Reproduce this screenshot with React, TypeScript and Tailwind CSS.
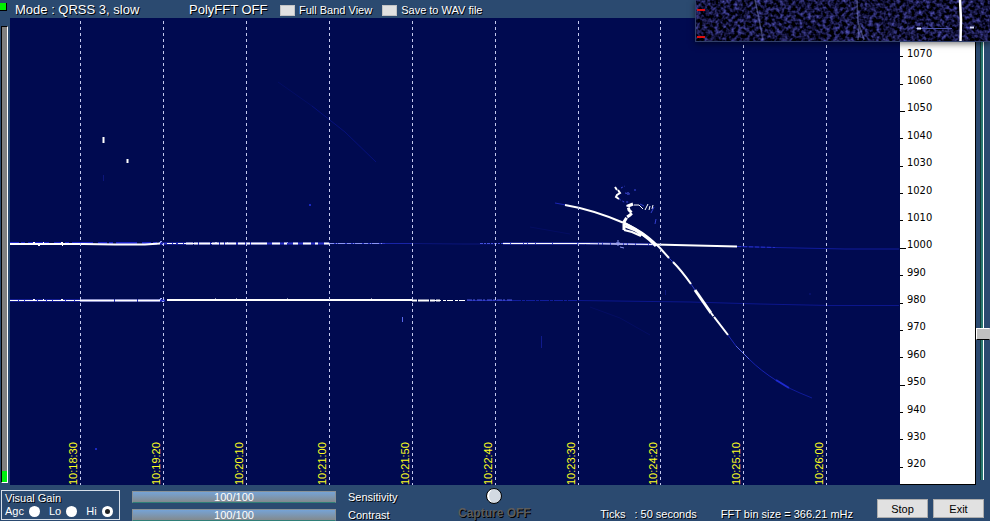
import { useState } from "react"

const TIME_MARKS = [
    { x: 80, label: "10:18:30" },
    { x: 163, label: "10:19:20" },
    { x: 246, label: "10:20:10" },
    { x: 329, label: "10:21:00" },
    { x: 412, label: "10:21:50" },
    { x: 495, label: "10:22:40" },
    { x: 578, label: "10:23:30" },
    { x: 660, label: "10:24:20" },
    { x: 743, label: "10:25:10" },
    { x: 826, label: "10:26:00" },
]

const FREQUENCIES = [1070, 1060, 1050, 1040, 1030, 1020, 1010, 1000, 990, 980, 970, 960, 950, 940, 930, 920]

type Trace = { d: string; color?: string; width?: number; dash?: string }

const TRACES: Trace[] = [
    // upper carrier
    { d: "M10 243.5H160", color: "#1c22c8", width: 3, dash: "9 2 4 3 21 5" },
    { d: "M10 244H83", width: 2 },
    { d: "M33 242.5H35M38 245.5H40M43 242.5H44M61 242.5H63M62 245.5H63M215 242.5H217M227 242.5H228M287 242.5H288" },
    { d: "M83 244L115 244.5H145L160 243.5", width: 2 },
    { d: "M160 243.5H330", color: "#2a30cc", width: 2 },
    { d: "M159 242.5H161M162 244.5H164M160 241.5H162", color: "#a0a8f8" },
    { d: "M167 243.5H215", dash: "5 1 3 2" },
    { d: "M186 243.5H262", width: 2, dash: "7 1 4 1 11 2" },
    { d: "M262 243.5H330", width: 2, dash: "5 5 8 4 3 6" },
    { d: "M330 243.5H385", color: "#2b36c4" },
    { d: "M330 243.5H382", color: "#8a94f4", dash: "4 2 1 1 7 2" },
    { d: "M385 243.5H412", color: "#1824a8" },
    { d: "M412 243.5L462 244H495", color: "#0a1478" },
    { d: "M480 243.5H505", color: "#4450dc", dash: "3 1 2 1" },
    { d: "M503 243.5H600L655 244.5", color: "#4048d0", width: 2 },
    { d: "M503 243.5H578L655 244.5", dash: "7 1 12 1 3 1" },
    { d: "M540 243.5H592", dash: "11 2" },
    { d: "M655 244.5L737 246.5", width: 2 },
    { d: "M737 246.5L775 247.5L845 249H899", color: "#101b9c" },
    { d: "M737 246.5L775 247.5", color: "#2630c8", dash: "4 2" },
    // lower carrier
    { d: "M10 300.5H165", color: "#2931d0", width: 2 },
    { d: "M10 300.5H80", dash: "8 1 5 1 12 1" },
    { d: "M33 299.5H35M43 299.5H44M61 299.5H63M215 299H216M236 299H237M287 299H288M371 299H372" },
    { d: "M80 300.5H160", width: 2, dash: "34 1 22 1" },
    { d: "M159 299.5H161M162 301.5H164M160 298.5H162", color: "#a0a8f8" },
    { d: "M167 300H412", width: 2 },
    { d: "M412 300.5H440", width: 2, dash: "5 1 11 1" },
    { d: "M435 300.5H467", dash: "6 2 3 1" },
    { d: "M467 300.5H512", color: "#1c26a8" },
    { d: "M467 300H512", color: "#4d58e0", dash: "5 1 2 2" },
    { d: "M512 300.5H578", color: "#111d9c", dash: "9 1 3 1" },
    { d: "M578 300.5L690 302L760 304L830 305.5H899", color: "#0b168c" },
    // doppler curve
    { d: "M555 203L566 205", color: "#1a24b4" },
    { d: "M565 205C583 208 603 214 624 223C644 232 653 241 660 248L669 258", width: 2 },
    { d: "M624 223C637 230 648 237 656 246", width: 3 },
    { d: "M669 258L673 262", color: "#3340c8" },
    { d: "M673 262C680 269 686 277 691 284", width: 2 },
    { d: "M691 284L695 290", color: "#3340c8" },
    { d: "M695 290L711 313", width: 3 },
    { d: "M711 313L728 335", width: 2, dash: "4 1 30 0" },
    { d: "M728 335L736 346", color: "#1c28b8" },
    { d: "M736 346L749 359", color: "#5562e4" },
    { d: "M749 359C757 367 766 374 777 381", color: "#1622b0" },
    { d: "M776 380L789 388", color: "#1e2ad0", width: 2 },
    { d: "M789 388L800 393L812 398", color: "#0f1a98" },
    // squiggle above the crossing
    { d: "M615 187L617 190M618 190L620 193L617 195L616 197L619 199", width: 2 },
    { d: "M619 199L624 202L629 202M625 193L630 194M621 188L625 186M635 189V192", color: "#3c48e0", dash: "2 2" },
    { d: "M628 192V195", color: "#5560f0" },
    { d: "M633 204L628 206L629 210L632 213L630 215L627 217L624 222L624 230", width: 3, dash: "6 1" },
    { d: "M624 230L632 232L641 236M624 226L634 230L646 237", width: 2 },
    { d: "M634 205L639 205L643 209M645 210L648 204M649 210L650 206M652 209L653 205" },
    { d: "M654 207L651 213M656 219L655 224M640 204L644 206", color: "#3340d0" },
    { d: "M618 240V246M616 243H620M620 247L624 248", color: "#8f98f0" },
    // stray specks
    { d: "M103.5 137V143M127.5 159V163", width: 2 },
    { d: "M103.5 175V181", color: "#0c167c" },
    { d: "M402.5 317V322", color: "#5a68ec" },
    { d: "M541.5 336V348", color: "#101a8c" },
    { d: "M309 205H311M95 449H97", color: "#1a28c0", width: 2 },
    { d: "M665.5 290V295M809 294H811", color: "#0c1780" },
    // faint echoes
    { d: "M278 82L312 106", color: "#030d64" },
    { d: "M312 106L345 132L376 162", color: "#06107a" },
    { d: "M530 227L570 234M590 307L620 318L650 335", color: "#040d62" },
]

const shadow = "[text-shadow:1px_1px_0_#000]"

const Spectrogram = () => (
    <svg
        viewBox="10 18 890 467"
        preserveAspectRatio="none"
        className="h-full min-h-[467px] w-full bg-[#000a50]"
        role="img"
        aria-label="Waterfall display"
    >
        {TRACES.map(({ d, color = "#fff", width = 1, dash }) => (
            <path key={d + color} d={d} fill="none" stroke={color} strokeWidth={width} strokeDasharray={dash} />
        ))}
        {TIME_MARKS.map(({ x, label }) => (
            <g key={label}>
                <path d={`M${x + 0.5} 21V485`} stroke="#c3c8ee" strokeDasharray="3 3" shapeRendering="crispEdges" />
                <text transform={`translate(${x - 3} 485) rotate(-90)`} className="fill-[#ffff20] text-[11px]">
                    {label}
                </text>
            </g>
        ))}
    </svg>
)

const FrequencyScale = () => (
    <div className="flex w-[76px] shrink-0 flex-col border-r border-b border-black bg-white pt-[22px] pb-[6px] font-['DejaVu_Sans_Condensed','Noto_Sans',sans-serif] text-[11px] leading-4 text-black">
        {FREQUENCIES.map(freq => (
            <div key={freq} className="flex flex-1 items-center">
                <span
                    className={`mt-[6px] h-px bg-black ${freq === 1000 ? "w-[6px]" : freq % 50 === 0 ? "w-[5px]" : "w-[3px]"}`}
                />
                <span className={freq === 1000 ? "ml-px" : freq % 50 === 0 ? "ml-[2px]" : "ml-1"}>{freq}</span>
            </div>
        ))}
    </div>
)

// Window of a second receiver, overlapping the corner of this one
const OverlapWindow = () => (
    <div className="absolute top-0 right-0 h-[42px] w-[295px] border-b border-l border-[#31406a] bg-[#04041c] shadow-[0_2px_6px_rgba(0,0,0,0.5)]">
        <svg viewBox="0 0 294 41" className="h-full w-full" aria-hidden="true">
            <filter id="noise" x="0" y="0" width="100%" height="100%" colorInterpolationFilters="sRGB">
                <feTurbulence type="fractalNoise" baseFrequency="0.26" numOctaves="2" seed="7" />
                <feColorMatrix values="0.7 0 0 0 -0.28  0.7 0 0 0 -0.28  1.4 0 0 0 -0.48  0 0 0 0 1" />
            </filter>
            <rect width="294" height="41" filter="url(#noise)" />
            <path
                d="M59 0L62 14L67 40M161 0L162 22L168 40M163 26L162 40"
                stroke="#8f96dc"
                strokeWidth="1.5"
                opacity="0.4"
                fill="none"
            />
            <path d="M220 28.5H256" stroke="#4b52a8" />
            <path d="M221 28.5H225M274 27.5H278" stroke="#d8dcff" strokeWidth="2" />
            <path d="M264 0L265 20L264.5 41" stroke="#fff" strokeWidth="2.5" fill="none" />
            <path d="M1 10H9M1 37H9" stroke="#e01010" strokeWidth="2" />
        </svg>
    </div>
)

const CheckOption = ({ id, label }: { id: string; label: string }) => (
    <label htmlFor={id} className={`flex items-center gap-1 text-[11px] ${shadow}`}>
        <input
            id={id}
            type="checkbox"
            className="h-[11px] w-[15px] appearance-none border border-[#c4c4c4] bg-[#e1e1e1] checked:bg-[#202020]"
        />
        {label}
    </label>
)

const LevelBar = ({ id, label }: { id: string; label: string }) => {
    const [level, setLevel] = useState(100)
    return (
        <div className="flex h-3 items-center gap-3">
            <div className="relative h-3 w-[204px]">
                <input
                    id={id}
                    type="range"
                    min={0}
                    max={100}
                    value={level}
                    onChange={e => setLevel(Number(e.target.value))}
                    className="block h-full w-full appearance-none border border-[#8a9297] border-b-[#2f7f78] bg-linear-to-b from-[#76a3d6] to-[#828a8e] [&::-webkit-slider-thumb]:h-3 [&::-webkit-slider-thumb]:w-1 [&::-webkit-slider-thumb]:appearance-none"
                />
                <span className="pointer-events-none absolute inset-0 text-center text-[11px] leading-3">{level}/100</span>
            </div>
            <label htmlFor={id} className={`text-[11px] leading-3 ${shadow}`}>
                {label}
            </label>
        </div>
    )
}

const VisualGain = () => {
    const [gain, setGain] = useState("Hi")
    return (
        <fieldset className="mb-px ml-px h-[30px] w-[119px] shrink-0 border border-[#d8e0ea] pt-px pl-[3px] text-[11px]">
            <legend className={`float-left w-full leading-[13px] ${shadow}`}>Visual Gain</legend>
            <div className="clear-both flex gap-[9px]">
                {["Agc", "Lo", "Hi"].map(option => (
                    <label key={option} className="flex items-center gap-[5px] leading-[13px]">
                        {option}
                        <input
                            type="radio"
                            name="gain"
                            checked={gain === option}
                            onChange={() => setGain(option)}
                            className="size-[11px] appearance-none rounded-full bg-white checked:border-[3px] checked:border-white checked:bg-[#222]"
                        />
                    </label>
                ))}
            </div>
        </fieldset>
    )
}

const App = () => {
    const [offset, setOffset] = useState(69)
    return (
        <div className="relative flex min-h-screen flex-col overflow-hidden bg-[#2b4a70] font-['Liberation_Sans',Arial,sans-serif] text-white">
            <header className={`flex h-[18px] items-center pt-[2px] text-[13px] leading-4 ${shadow}`}>
                <span className="mb-[6px] h-2 w-[7px] border-r border-b border-black bg-[#00f000]" />
                <span className="ml-2 w-[174px]">Mode : QRSS 3, slow</span>
                <span className="w-[91px]">PolyFFT OFF</span>
                <div className="flex gap-[10px]">
                    <CheckOption id="full-band" label="Full Band View" />
                    <CheckOption id="save-wav" label="Save to WAV file" />
                </div>
            </header>

            <main className="flex flex-1">
                <div className="w-[10px] shrink-0 pt-2 pr-[2px] pb-[2px] pl-px">
                    <div className="flex h-full flex-col justify-end border-t border-r border-b border-l border-t-black border-r-white border-b-white border-l-black bg-[#808080]">
                        <div className="h-[11px] bg-[#00f010]" />
                    </div>
                </div>
                <div className="min-w-0 flex-1">
                    <Spectrogram />
                </div>
                <FrequencyScale />
                <div className="flex w-[14px] shrink-0 pb-[5px]">
                    <input
                        type="range"
                        aria-label="Frequency offset"
                        value={offset}
                        onChange={e => setOffset(Number(e.target.value))}
                        className="w-[14px] appearance-none border-b border-transparent bg-[linear-gradient(to_right,transparent_4px,#103838_4px,#103838_5px,#2a7a72_5px,#2a7a72_7px,#fff_7px,#fff_8px,transparent_8px)] [writing-mode:vertical-lr] [&::-webkit-slider-thumb]:h-3 [&::-webkit-slider-thumb]:w-[14px] [&::-webkit-slider-thumb]:appearance-none [&::-webkit-slider-thumb]:border [&::-webkit-slider-thumb]:border-t-white [&::-webkit-slider-thumb]:border-r-[#c0c0c0] [&::-webkit-slider-thumb]:border-b-black [&::-webkit-slider-thumb]:border-l-white [&::-webkit-slider-thumb]:bg-[#c0c0c0]"
                    />
                </div>
            </main>

            <footer className="flex h-9 items-end">
                <VisualGain />
                <div className="ml-3 flex w-[312px] flex-col gap-[6px]">
                    <LevelBar id="sensitivity" label="Sensitivity" />
                    <LevelBar id="contrast" label="Contrast" />
                </div>
                <div className="mb-px ml-[14px] flex flex-col items-center gap-[2px]">
                    <button
                        type="button"
                        aria-label="Start capture"
                        className="size-4 rounded-full border border-black bg-[#d3dae2] shadow-[inset_3px_0_0_-1px_#fff]"
                    />
                    <span className="text-[12px] leading-[14px] font-bold text-[#5c5c5c] [text-shadow:1px_1px_0_#000]">Capture OFF</span>
                </div>
                <div className={`ml-auto flex gap-6 text-[11px] leading-[14px] ${shadow}`}>
                    <span className="flex gap-[9px]">
                        <span>Ticks</span>
                        <span>: 50 seconds</span>
                    </span>
                    <span>FFT bin size = 366.21 mHz</span>
                </div>
                <div className="mr-[6px] mb-[3px] ml-[24px] flex gap-[5px] text-[11px] text-black">
                    <button type="button" className="h-[19px] w-[51px] border border-[#adadad] bg-[#e1e1e1] leading-4">
                        Stop
                    </button>
                    <button type="button" className="h-[19px] w-[51px] border border-[#adadad] bg-[#e1e1e1] leading-4">
                        Exit
                    </button>
                </div>
            </footer>

            <OverlapWindow />
        </div>
    )
}

export default App
